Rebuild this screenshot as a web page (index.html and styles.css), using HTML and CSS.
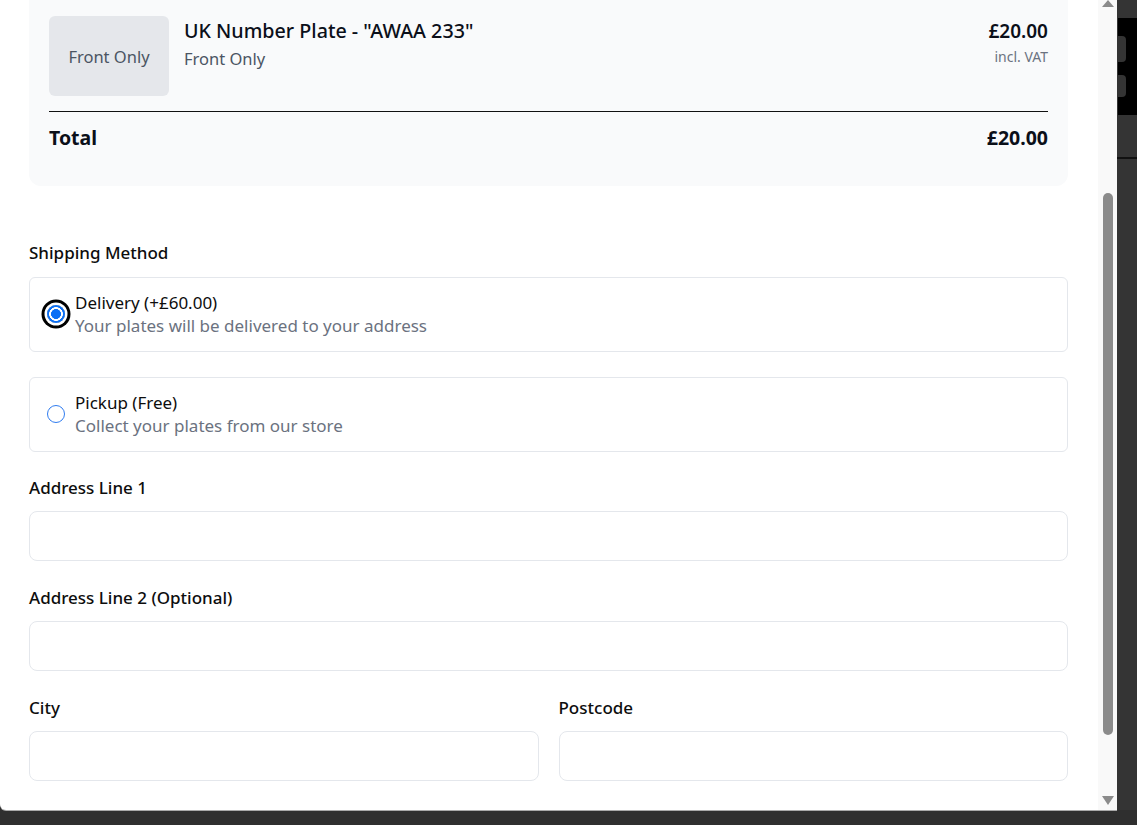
FILE: index.html
```html
<!DOCTYPE html>
<html lang="en">
<head>
<meta charset="utf-8">
<title>Checkout</title>
<link rel="stylesheet" href="styles.css">
</head>
<body>
<div class="stage">
  <div class="modal">
    <div class="modal-body">
      <section class="summary">
        <div class="item">
          <div class="item-thumb">Front Only</div>
          <div class="item-info">
            <div class="item-title">UK Number Plate - "AWAA 233"</div>
            <div class="item-sub">Front Only</div>
          </div>
          <div class="item-price">
            <div class="price">£20.00</div>
            <div class="vat">incl. VAT</div>
          </div>
        </div>
        <div class="total-row">
          <span>Total</span>
          <span>£20.00</span>
        </div>
      </section>

      <section class="shipping">
        <div class="field-label">Shipping Method</div>
        <label class="option">
          <span class="radio checked"></span>
          <span class="option-text">
            <span class="option-title">Delivery (+£60.00)</span>
            <span class="option-desc">Your plates will be delivered to your address</span>
          </span>
        </label>
        <label class="option">
          <span class="radio"></span>
          <span class="option-text">
            <span class="option-title">Pickup (Free)</span>
            <span class="option-desc">Collect your plates from our store</span>
          </span>
        </label>
      </section>

      <div class="field">
        <div class="field-label">Address Line 1</div>
        <div class="input"></div>
      </div>
      <div class="field">
        <div class="field-label">Address Line 2 (Optional)</div>
        <div class="input"></div>
      </div>
      <div class="field-row">
        <div class="col">
          <div class="field-label">City</div>
          <div class="input"></div>
        </div>
        <div class="col">
          <div class="field-label">Postcode</div>
          <div class="input"></div>
        </div>
      </div>
    </div>
    <div class="scrollbar">
      <span class="arrow-up"></span>
      <span class="thumb"></span>
      <span class="spacer"></span>
      <span class="arrow-down"></span>
    </div>
  </div>
  <div class="backdrop">
    <svg class="plate-glyph" width="20" height="97" viewBox="0 0 20 97">
      <rect x="1" y="0" width="19" height="97" fill="#000"/>
      <rect x="-4" y="18" width="13" height="26" rx="4" fill="#343434"/>
      <rect x="-4" y="57" width="13" height="22" rx="4" fill="#343434"/>
    </svg>
    <div class="plate-rule"></div>
  </div>
</div>
</body>
</html>
```

FILE: styles.css
```css
* { box-sizing: border-box; }

html, body {
  margin: 0;
  padding: 0;
}

body {
  width: 1137px;
  height: 825px;
  overflow: hidden;
  background: #2f2f2f;
  font-family: "Noto Sans", "Open Sans", sans-serif;
  color: #111827;
}

.stage {
  display: flex;
  height: 810px;
}

.modal {
  flex: none;
  width: 1117px;
  height: 810px;
  display: flex;
  background: #fff;
  border-bottom-left-radius: 6px;
  box-shadow: 0 1px 0 #a9a9a9;
  overflow: hidden;
}

.modal-body {
  flex: 1;
  padding: 0 30px 0 29px;
  overflow: hidden;
}

/* Order summary */
.summary {
  background: #f9fafb;
  border-radius: 0 0 12px 12px;
  padding: 16px 20px 34px;
}

.item {
  display: flex;
  align-items: flex-start;
  gap: 15px;
}

.item-thumb {
  flex: none;
  width: 120px;
  height: 80px;
  border-radius: 6px;
  background: #e5e7eb;
  color: #4b5563;
  font-size: 16.5px;
  display: flex;
  align-items: center;
  justify-content: center;
}

.item-info {
  flex: 1;
}

.item-title {
  font-size: 19.7px;
  font-weight: 500;
  line-height: 30px;
  color: #0b0f19;
}

.item-sub {
  font-size: 16.5px;
  line-height: 26px;
  color: #4b5563;
}

.item-price {
  text-align: right;
}

.price {
  font-size: 19px;
  font-weight: 600;
  line-height: 30px;
  color: #0b0f19;
}

.vat {
  font-size: 14px;
  line-height: 22px;
  color: #6b7280;
}

.total-row {
  margin-top: 15px;
  border-top: 1px solid #111;
  padding-top: 12px;
  display: flex;
  justify-content: space-between;
  font-size: 19.5px;
  font-weight: 700;
  line-height: 28px;
  color: #0b0f19;
}

/* Shipping */
.shipping {
  margin-top: 55px;
}

.field-label {
  font-size: 17px;
  font-weight: 500;
  line-height: 24px;
  color: #0d0d0d;
}

.shipping .field-label {
  margin-bottom: 12px;
}

.option {
  display: flex;
  align-items: center;
  gap: 10.5px;
  border: 1px solid #e4e7ec;
  border-radius: 6px;
  padding: 13px 17px 14px 16.5px;
}

.option + .option {
  margin-top: 25px;
}

.radio {
  flex: none;
  width: 18px;
  height: 18px;
  border-radius: 50%;
  border: 1.3px solid #2f7cf0;
  background: #fff;
}

.radio.checked {
  border: none;
  background: radial-gradient(circle, #0b6ff5 0 4.7px, #fff 5.2px 6.6px, #0b6ff5 7.1px);
  box-shadow: 0 0 0 2.5px #fff, 0 0 0 5.5px #000;
}

.option-text {
  display: flex;
  flex-direction: column;
  font-size: 17px;
  line-height: 23px;
}

.option-title {
  color: #0d0d0d;
}

.option-desc {
  color: #6b7280;
}

/* Fields */
.field,
.field-row {
  margin-top: 24px;
}

.field + .field,
.field + .field-row {
  margin-top: 25px;
}

.field .field-label,
.col .field-label {
  margin-bottom: 11px;
}

.input {
  height: 50px;
  border: 1px solid #e4e7ec;
  border-radius: 8px;
  background: #fff;
}

.field-row {
  display: grid;
  grid-template-columns: 1fr 1fr;
  gap: 20px;
}

/* Scrollbar */
.scrollbar {
  flex: none;
  width: 19px;
  background: #f9f9f9;
  display: flex;
  flex-direction: column;
  align-items: center;
}

.arrow-up {
  width: 0;
  height: 0;
  border-left: 6px solid transparent;
  border-right: 6px solid transparent;
  border-bottom: 7px solid #8b8b8b;
}

.thumb {
  margin-top: 186px;
  width: 10px;
  height: 542px;
  border-radius: 5px;
  background: #8b8b8b;
}

.spacer {
  flex: 1;
}

.arrow-down {
  width: 0;
  height: 0;
  margin-bottom: 5px;
  border-left: 6px solid transparent;
  border-right: 6px solid transparent;
  border-top: 9px solid #8b8b8b;
}

/* Backdrop strip */
.backdrop {
  flex: 1;
  background: #343434;
  display: flex;
  flex-direction: column;
}

.plate-glyph {
  display: block;
  margin-top: 18px;
}

.plate-rule {
  margin-top: 42px;
  height: 2px;
  background: #111;
}
```
